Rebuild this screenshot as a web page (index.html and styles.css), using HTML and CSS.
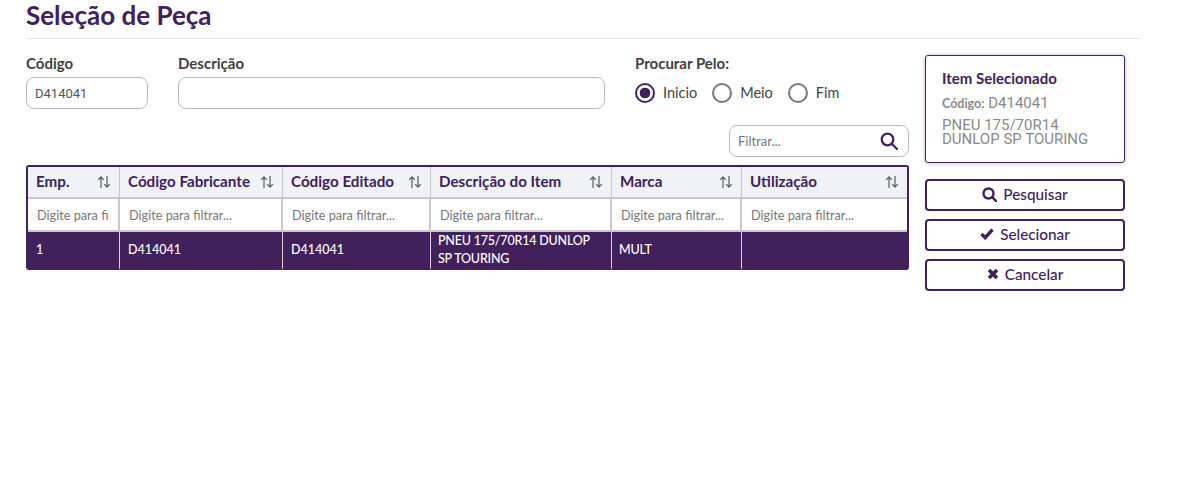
FILE: index.html
```html
<!DOCTYPE html>
<html lang="pt-BR">

<head>
    <meta charset="UTF-8">
    <meta name="viewport" content="width=device-width, initial-scale=1.0">
    <title>Seleção de Peça</title>
    <link rel="stylesheet" href="styles.css">
</head>

<body>
    <svg class="sprite" width="0" height="0">
        <symbol id="ordem" viewBox="0 0 14 14">
            <path d="M4 13V2M1.2 4.8L4 1.8l2.8 3M10 1v11M7.2 9.2l2.8 3 2.8-3" fill="none" stroke="#5a5a5a" stroke-width="1.2"/>
        </symbol>
    </svg>

    <div class="page">
        <h1 class="titulo">Seleção de Peça</h1>

        <div class="conteudo">
            <div class="principal">
                <div class="form-linha">
                    <div class="campo campo-codigo">
                        <label for="codigo">Código</label>
                        <input type="text" id="codigo" value="D414041">
                    </div>
                    <div class="campo campo-descricao">
                        <label for="descricao">Descrição</label>
                        <input type="text" id="descricao">
                    </div>
                    <div class="campo">
                        <label>Procurar Pelo:</label>
                        <div class="radios">
                            <span class="radio marcado"></span><span class="radio-texto">Inicio</span>
                            <span class="radio"></span><span class="radio-texto">Meio</span>
                            <span class="radio"></span><span class="radio-texto">Fim</span>
                        </div>
                    </div>
                </div>

                <div class="filtro-linha">
                    <div class="filtro">
                        <input type="text" placeholder="Filtrar...">
                        <svg width="18" height="18" viewBox="0 0 18 18" fill="none" stroke="#41205c" stroke-width="2.2">
                            <circle cx="7.5" cy="7.5" r="5.8"/>
                            <path d="M12 12l5 5" stroke-linecap="round"/>
                        </svg>
                    </div>
                </div>

                <table class="tabela">
                    <colgroup>
                        <col class="c-emp"><col class="c-fab"><col class="c-edit"><col class="c-desc"><col class="c-marca"><col class="c-uso">
                    </colgroup>
                    <thead>
                        <tr class="cabecalho">
                            <th><div class="th-in">Emp.<svg class="ordem"><use href="#ordem"/></svg></div></th>
                            <th><div class="th-in">Código Fabricante<svg class="ordem"><use href="#ordem"/></svg></div></th>
                            <th><div class="th-in">Código Editado<svg class="ordem"><use href="#ordem"/></svg></div></th>
                            <th><div class="th-in">Descrição do Item<svg class="ordem"><use href="#ordem"/></svg></div></th>
                            <th><div class="th-in">Marca<svg class="ordem"><use href="#ordem"/></svg></div></th>
                            <th><div class="th-in">Utilização<svg class="ordem"><use href="#ordem"/></svg></div></th>
                        </tr>
                        <tr class="filtros">
                            <th><input type="text" placeholder="Digite para filtrar..."></th>
                            <th><input type="text" placeholder="Digite para filtrar..."></th>
                            <th><input type="text" placeholder="Digite para filtrar..."></th>
                            <th><input type="text" placeholder="Digite para filtrar..."></th>
                            <th><input type="text" placeholder="Digite para filtrar..."></th>
                            <th><input type="text" placeholder="Digite para filtrar..."></th>
                        </tr>
                    </thead>
                    <tbody>
                        <tr class="selecionada">
                            <td>1</td>
                            <td>D414041</td>
                            <td>D414041</td>
                            <td class="apertado">PNEU 175/70R14 DUNLOP SP TOURING</td>
                            <td class="apertado">MULT</td>
                            <td></td>
                        </tr>
                    </tbody>
                </table>
            </div>

            <div class="lateral">
                <div class="card">
                    <h2>Item Selecionado</h2>
                    <p class="card-codigo"><strong>Código:</strong> D414041</p>
                    <p class="card-desc">PNEU 175/70R14 DUNLOP SP TOURING</p>
                </div>
                <div class="botoes">
                    <button>
                        <svg width="15" height="15" viewBox="0 0 15 15" fill="none" stroke="#41205c" stroke-width="2.4">
                            <circle cx="6.5" cy="6.5" r="5"/>
                            <path d="M10.2 10.2l4 4" stroke-linecap="round"/>
                        </svg>
                        Pesquisar
                    </button>
                    <button>
                        <svg width="14" height="12" viewBox="0 0 14 12" fill="none" stroke="#41205c" stroke-width="3.4">
                            <path d="M1.5 6l3.7 3.7 7.3-8"/>
                        </svg>
                        Selecionar
                    </button>
                    <button>
                        <svg width="12" height="12" viewBox="0 0 12 12" fill="none" stroke="#41205c" stroke-width="3.6">
                            <path d="M2 2l8 8M10 2l-8 8"/>
                        </svg>
                        Cancelar
                    </button>
                </div>
            </div>
        </div>
    </div>
</body>

</html>
```

FILE: styles.css
```css
* {
    box-sizing: border-box;
}

body {
    font-family: Lato, "Noto Sans", sans-serif;
    background-color: #fff;
    color: #3a3a3a;
    margin: 0;
}

.sprite {
    display: block;
}

.page {
    width: 1114px;
    margin-left: 26px;
}

.titulo {
    margin: 0;
    height: 39px;
    font-size: 26px;
    line-height: 31px;
    font-weight: 700;
    color: #41205c;
    border-bottom: 1px solid #e6e6e6;
}

.conteudo {
    display: flex;
    gap: 16px;
    padding-top: 16px;
}

.principal {
    width: 883px;
}

.form-linha {
    display: flex;
    height: 54px;
}

.campo label {
    display: block;
    height: 22px;
    font-size: 15px;
    line-height: 16px;
    font-weight: 700;
    color: #3f3f3f;
}

.campo input {
    display: block;
    width: 100%;
    height: 32px;
    padding: 0 8px;
    border: 1px solid #b9b9b9;
    border-radius: 8px;
    font-family: Roboto, sans-serif;
    font-size: 13px;
    color: #555;
    outline: none;
}

.campo-codigo {
    width: 122px;
    margin-right: 30px;
}

.campo-descricao {
    width: 427px;
    margin-right: 30px;
}

.radios {
    display: flex;
    align-items: center;
    height: 31px;
}

.radio {
    width: 20px;
    height: 20px;
    border: 2px solid #777;
    border-radius: 50%;
    margin-right: 8px;
}

.radio.marcado {
    border-color: #41205c;
    background: radial-gradient(circle, #41205c 0 5px, #fff 5.6px);
}

.radio-texto {
    font-size: 14.5px;
    color: #444;
    margin-right: 15px;
}

.filtro-linha {
    display: flex;
    justify-content: flex-end;
    margin-top: 16px;
}

.filtro {
    display: flex;
    align-items: center;
    width: 180px;
    height: 32px;
    padding: 0 10px 0 8px;
    border: 1px solid #b9b9b9;
    border-radius: 8px;
}

.filtro input {
    flex: 1;
    min-width: 0;
    border: none;
    outline: none;
    padding: 0;
    font-family: Lato, sans-serif;
    font-size: 13px;
}

.filtro input::placeholder,
.filtros input::placeholder {
    color: #777;
    opacity: 1;
}

.tabela {
    width: 883px;
    margin-top: 8px;
    table-layout: fixed;
    border-collapse: separate;
    border-spacing: 0;
    border: 2px solid #41205c;
    border-bottom: 0;
    border-radius: 3px;
}

.c-emp { width: 92px; }
.c-fab { width: 163px; }
.c-edit { width: 148px; }
.c-desc { width: 181px; }
.c-marca { width: 130px; }

.cabecalho th {
    height: 32px;
    padding: 0;
    background-color: #f1f2f7;
    border-right: 1px solid #c8c8c8;
    border-bottom: 2px solid #c8c8c8;
    text-align: left;
}

.th-in {
    display: flex;
    justify-content: space-between;
    align-items: center;
    padding: 0 8px 2px 8px;
    font-size: 15.2px;
    font-weight: 700;
    color: #41205c;
}

.ordem {
    width: 14px;
    height: 14px;
    flex: none;
    margin-top: 2px;
}

.filtros th {
    height: 33px;
    padding: 0;
    border-right: 2px solid #c8c8c8;
    border-bottom: 2px solid #c8c8c8;
    font-weight: 400;
}

.cabecalho th:last-child,
.filtros th:last-child {
    border-right: 0;
}

.filtros input {
    display: block;
    width: 100%;
    height: 31px;
    padding: 0 9px;
    border: none;
    outline: none;
    font-family: Lato, sans-serif;
    font-size: 12.7px;
}

.selecionada td {
    height: 37px;
    padding: 0 8px;
    background-color: #41205c;
    color: #fff;
    font-size: 12.5px;
    line-height: 18px;
    font-weight: 500;
    border-right: 1px solid #d8d0e0;
    border-bottom: 2px solid #41205c;
}

.selecionada td.apertado {
    padding-left: 7px;
    letter-spacing: -0.2px;
}

.selecionada td:last-child {
    border-right: 0;
}

.lateral {
    width: 200px;
}

.card {
    height: 108px;
    padding: 13px 16px;
    border: 1px solid #41205c;
    border-radius: 3px;
    box-shadow: 0 0 4px rgba(65, 32, 92, 0.35);
}

.card h2 {
    margin: 0;
    font-size: 15px;
    line-height: 18px;
    font-weight: 700;
    color: #41205c;
}

.card p {
    margin: 0;
    font-family: Roboto, sans-serif;
    color: #8a8a8a;
    font-size: 15px;
}

.card-codigo {
    margin-top: 7px !important;
    line-height: 18px;
}

.card-codigo strong {
    font-family: Lato, sans-serif;
    font-size: 12.5px;
}

.card-desc {
    margin-top: 5px !important;
    line-height: 14px;
}

.botoes {
    display: flex;
    flex-direction: column;
    gap: 8px;
    margin-top: 16px;
}

.botoes button {
    display: flex;
    justify-content: center;
    align-items: center;
    gap: 6px;
    height: 32px;
    padding: 0 0 2px;
    background-color: #fff;
    border: 2px solid #41205c;
    border-radius: 4px;
    font-family: Lato, sans-serif;
    font-size: 15.3px;
    font-weight: 500;
    color: #41205c;
    cursor: pointer;
}
```
